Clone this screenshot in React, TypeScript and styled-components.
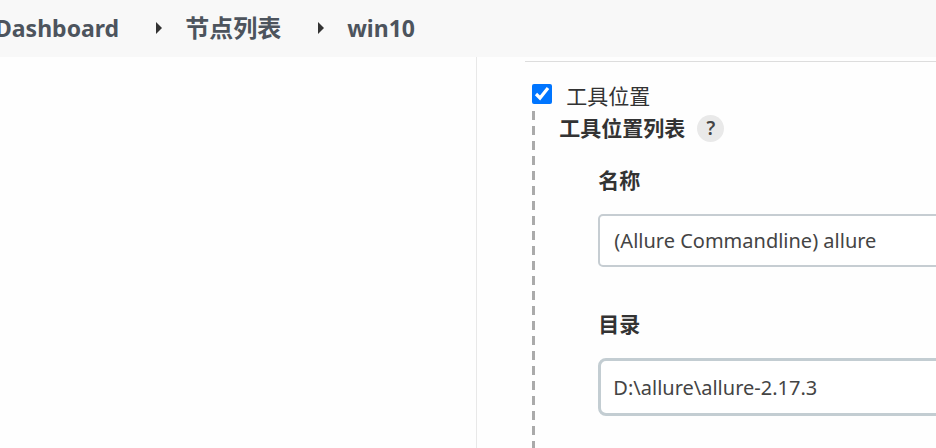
import React from "react";
import styled, { createGlobalStyle } from "styled-components";

const Global = createGlobalStyle`
  * { box-sizing: border-box; }
  body {
    margin: 0;
    overflow: hidden;
    background: #fefefe;
    color: #333;
    font-family: "Noto Sans", "Noto Sans CJK SC", sans-serif;
  }
`;

const Page = styled.div`
  display: flex;
  flex-direction: column;
  height: 100vh;
  overflow: hidden;
`;

const Crumbs = styled.nav`
  display: flex;
  align-items: center;
  flex: none;
  margin-left: -5px;
  padding: 12px 0 13px;
  background: #f8f8f8;
  white-space: nowrap;
`;

const Crumb = styled.a<{ $cjk?: boolean }>`
  color: #4d545d;
  font-size: ${(p) => (p.$cjk ? 24 : 23)}px;
  line-height: 32px;
  font-weight: 700;
  text-decoration: none;
`;

const Arrow = styled.svg`
  width: 8px;
  height: 12px;
  margin: 0 22px 0 36px;
  fill: #333;
`;

const Body = styled.div`
  display: flex;
  flex: 1;
  min-height: 0;
`;

const Side = styled.aside`
  flex: 0 0 51%;
  border-right: 1px solid #e8e8e8;
`;

const Main = styled.main`
  display: flex;
  flex-direction: column;
  flex: 1;
  min-width: 0;
  padding: 4px 0 0 48px;
`;

const Section = styled.section`
  display: flex;
  flex-direction: column;
  flex: 1;
  border-top: 1px solid #ddd;
  padding: 20px 0 0 7px;
`;

const Check = styled.label`
  display: flex;
  align-items: flex-start;
  gap: 14px;
  font-size: 21px;
  line-height: 28px;
`;

const Box = styled.input`
  width: 20px;
  height: 20px;
  margin: 2px 0 0;
  accent-color: #0075ff;
`;

const Nested = styled.div`
  flex: 1;
  margin-top: 1px;
  padding: 1px 0 0 27px;
  background: repeating-linear-gradient(#aaa 0 9px, transparent 9px 15px) left top / 3px 100% no-repeat;
`;

const Heading = styled.h2`
  display: flex;
  align-items: center;
  gap: 12px;
  margin: 0;
  font-size: 21px;
  line-height: 32px;
`;

const Help = styled.button`
  width: 27px;
  height: 27px;
  border: 0;
  border-radius: 50%;
  padding: 0;
  background: #e9e9e9;
  color: #444;
  font: 600 19px "Noto Sans", sans-serif;
`;

const Field = styled.div`
  display: flex;
  flex-direction: column;
  margin: 22px -12px 43px 39px;
`;

const Label = styled.label`
  margin-bottom: 20px;
  font-size: 21px;
  line-height: 28px;
  font-weight: 700;
`;

const Select = styled.select`
  appearance: none;
  height: 53px;
  border: 2px solid #c6cdd2;
  border-radius: 5px;
  padding: 0 14px;
  background: #fff;
  color: #444;
  font: 20px "Noto Sans", sans-serif;
`;

const Input = styled.input`
  min-width: 0;
  height: 58px;
  border: 3px solid #c3cdd2;
  border-radius: 8px;
  padding: 0 12px;
  background: #fff;
  color: #444;
  font: 20px "Noto Sans", sans-serif;
`;

const Separator = () => (
  <Arrow viewBox="0 0 8 12" aria-hidden="true">
    <path d="M1 0 7 6 1 12Z" />
  </Arrow>
);

export default function App() {
  return (
    <Page>
      <Global />
      <Crumbs>
        <Crumb href="#dashboard">Dashboard</Crumb>
        <Separator />
        <Crumb href="#nodes" $cjk>节点列表</Crumb>
        <Separator />
        <Crumb href="#win10">win10</Crumb>
      </Crumbs>
      <Body>
        <Side />
        <Main>
          <Section>
            <Check>
              <Box type="checkbox" defaultChecked />
              工具位置
            </Check>
            <Nested>
              <Heading>
                工具位置列表
                <Help type="button">?</Help>
              </Heading>
              <Field>
                <Label htmlFor="tool-name">名称</Label>
                <Select id="tool-name">
                  <option>(Allure Commandline) allure</option>
                </Select>
              </Field>
              <Field>
                <Label htmlFor="tool-home">目录</Label>
                <Input id="tool-home" defaultValue={"D:\\allure\\allure-2.17.3"} />
              </Field>
            </Nested>
          </Section>
        </Main>
      </Body>
    </Page>
  );
}
